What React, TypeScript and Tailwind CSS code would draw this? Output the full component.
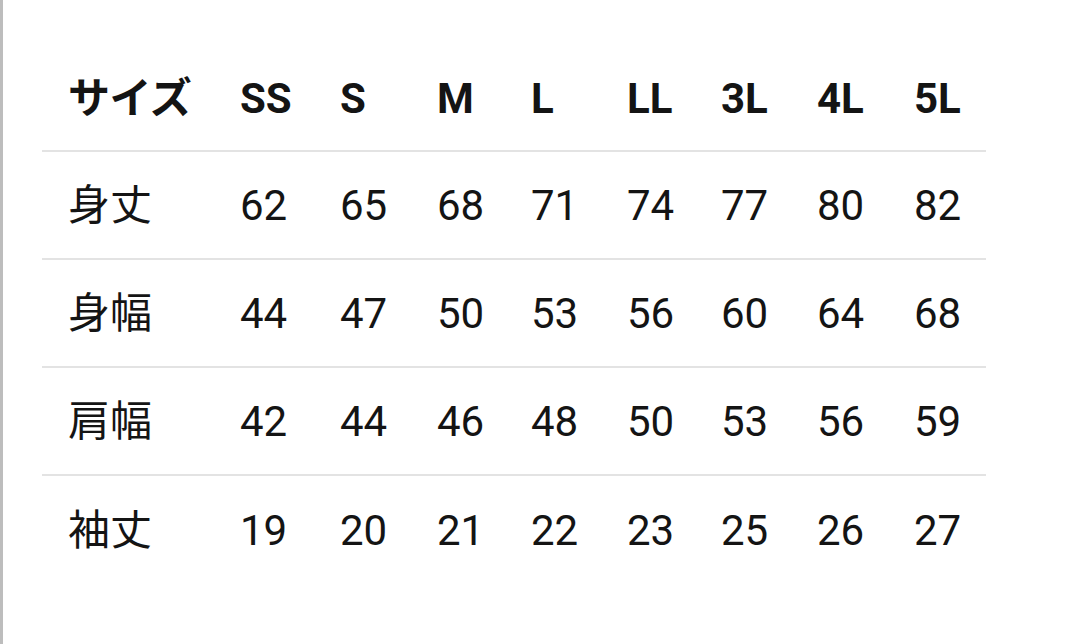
const headers = ['SS', 'S', 'M', 'L', 'LL', '3L', '4L', '5L'];

const rows: { label: string; values: number[] }[] = [
  { label: '身丈', values: [62, 65, 68, 71, 74, 77, 80, 82] },
  { label: '身幅', values: [44, 47, 50, 53, 56, 60, 64, 68] },
  { label: '肩幅', values: [42, 44, 46, 48, 50, 53, 56, 59] },
  { label: '袖丈', values: [19, 20, 21, 22, 23, 25, 26, 27] },
];

const grid =
  'grid grid-cols-[198px_100px_97px_94px_96px_94px_96px_97px_72px] items-center';

export default function App() {
  return (
    <main
      className="h-[644px] w-[1065px] overflow-hidden border-l-[3px] border-[#bdbdbd] bg-white text-[#141414]"
      style={{ fontFamily: 'Roboto, "Noto Sans CJK JP", sans-serif' }}
    >
      <div className="ml-[39px] mt-[46px] w-[944px]">
        <div className={`${grid} h-[106px] border-b-2 border-[#e3e3e3] text-[42px] font-bold`}>
          <span className="pl-[26px] tracking-[-0.5px]">サイズ</span>
          {headers.map((h) => (
            <span key={h}>{h}</span>
          ))}
        </div>

        {rows.map((row, i) => (
          <div
            key={row.label}
            className={`${grid} h-[108px] text-[42px] ${
              i < rows.length - 1 ? 'border-b-2 border-[#e3e3e3]' : ''
            }`}
          >
            <span className="pl-[26px]">{row.label}</span>
            {row.values.map((v, j) => (
              <span key={j}>{v}</span>
            ))}
          </div>
        ))}
      </div>
    </main>
  );
}
